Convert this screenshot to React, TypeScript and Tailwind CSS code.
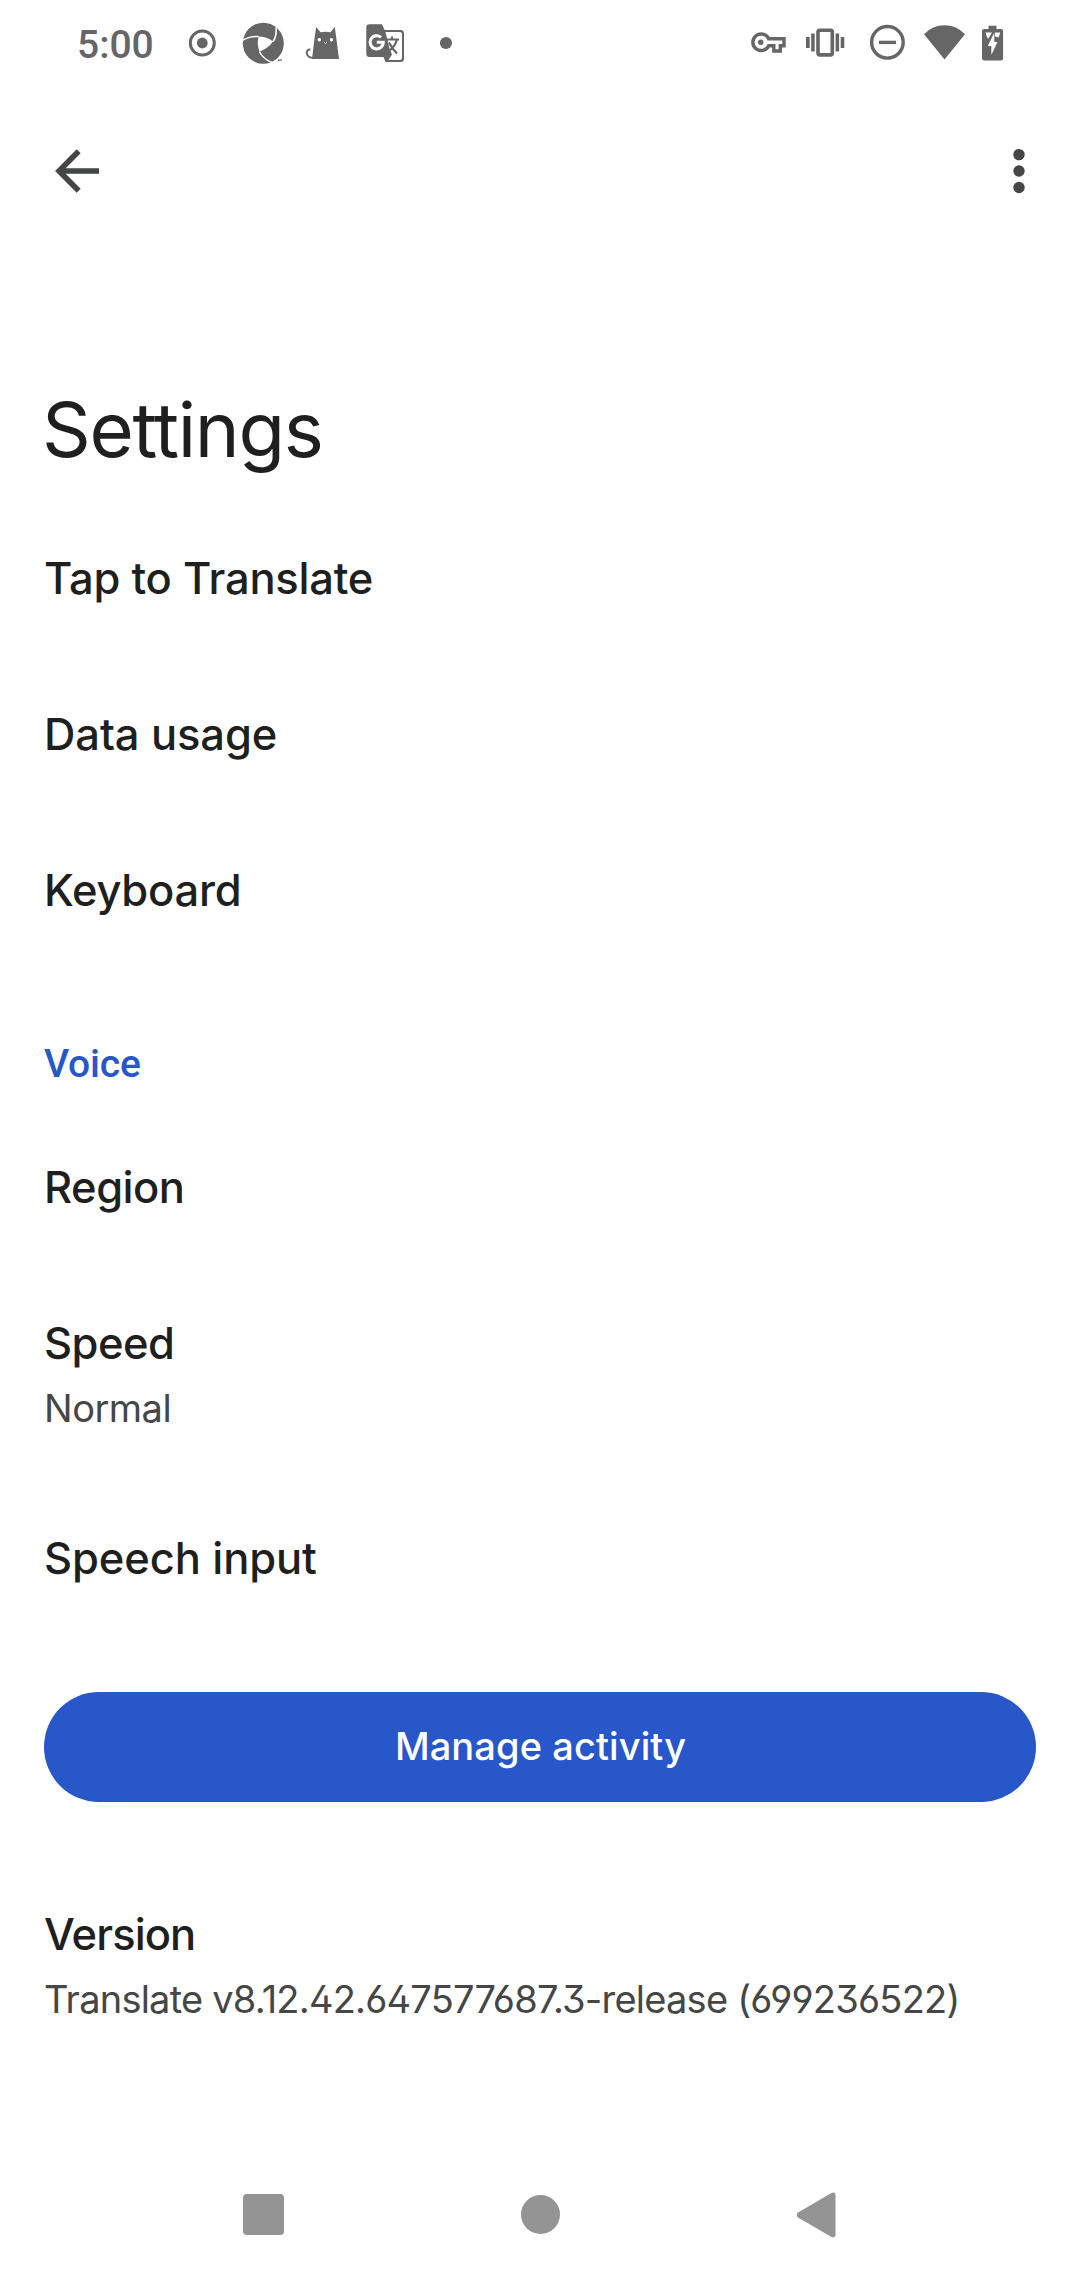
import React from "react";

function StatusBar() {
  return (
    <header className="flex h-[86px] shrink-0 items-start text-[#666666]">
      <span className="ml-[77px] mt-[19px] w-[105px] font-[Roboto] text-[39px] leading-[52px] font-medium">5:00</span>
      <svg className="mt-5 h-[46px] w-[40px]" viewBox="182 20 40 46" fill="currentColor">
        <circle cx="202.3" cy="43" r="12" fill="none" stroke="currentColor" strokeWidth="3" />
        <circle cx="202.3" cy="43" r="5.4" />
      </svg>
      <svg className="ml-[16px] mt-5 h-[46px] w-[50px]" viewBox="238 20 50 46" fill="currentColor">
        <circle cx="263.3" cy="43.3" r="20.5" />
        <path d="M258.500 36.500Q267 36.500 273 41.500Q268 48.500 259.500 51.500Q256.500 44 258.500 36.500Z" fill="#fff" />
        <path
          d="M242 40.500Q249.500 36 258.500 36.500M273 41.500Q277 36 276 27.500M259.500 51.500Q263 59 272 62.500"
          fill="none"
          stroke="#fff"
          strokeWidth="1.600"
        />
        <path d="M278 59.500h4v1.200h-4z" />
      </svg>
      <svg className="ml-[14px] mt-5 h-[46px] w-[42px]" viewBox="302 20 42 46" fill="currentColor">
        <path d="M316.200 27 320.500 32.300Q325.500 31.300 330.500 32.300L334.800 27 336 36 339 59H312L314.800 36Z" />
        <path d="M315 57.800C309 58.300 306.800 55.500 306.700 52.700C306.600 50.500 308.300 49.300 310.300 49.600" fill="none" stroke="currentColor" strokeWidth="2" />
        <circle cx="319.300" cy="39.700" r="1.700" fill="#fff" />
        <circle cx="331.500" cy="39.700" r="1.700" fill="#fff" />
        <path d="m324.300 42.500 1.300 1 1.300-1" stroke="#fff" strokeWidth=".8" fill="none" />
      </svg>
      <svg className="ml-[20px] mt-5 h-[46px] w-[42px]" viewBox="364 20 42 46" fill="currentColor">
        <path d="M369.500 24.300H382L384.600 30H400.500Q404 30 404 33.500V58.500Q404 62 400.500 62H385.500L383.500 57H369.500Q366.300 57 366.300 53.800V27.500Q366.300 24.300 369.500 24.300Z" />
        <path d="M385.500 32H400Q402 32 402 34V58Q402 60 400 60H388.500L392 54.500 389.500 48.500Z" fill="#fff" />
        <path d="M381 37.300A6.600 6.600 0 1 0 383.300 42.300H376.800" fill="none" stroke="#fff" strokeWidth="3" />
        <path d="M387 39.500H399M392 36.500V39.500M397 39.500Q395 47 388 51.500M389 42.500Q392 48.500 397 53.500" fill="none" stroke="currentColor" strokeWidth="2.200" />
      </svg>
      <svg className="ml-[30px] mt-5 h-[46px] w-[20px]" viewBox="436 20 20 46" fill="currentColor">
        <circle cx="446" cy="43" r="6.100" />
      </svg>
      <svg className="ml-[292px] mt-5 h-[46px] w-[40px]" viewBox="748 20 40 46" fill="none" stroke="currentColor" strokeWidth="3.400">
        <path d="M768.700 38.800H784V45.700H780.300V51H773.800V45.700H768.700A8.300 8.300 0 1 1 768.700 38.800Z" />
        <circle cx="760.700" cy="42.300" r="2.700" fill="currentColor" stroke="none" />
      </svg>
      <svg className="ml-[16px] mt-5 h-[46px] w-[42px]" viewBox="804 20 42 46" fill="currentColor">
        <path d="M806 37h3.700v11H806zM811.200 33.500h3.500v18h-3.500zM835.600 33.500h3.500v18h-3.500zM840.700 37h3.600v11h-3.600z" />
        <rect x="818" y="30.300" width="14.300" height="24.600" rx="1.800" fill="none" stroke="currentColor" strokeWidth="3.600" />
      </svg>
      <svg className="ml-[20px] mt-5 h-[46px] w-[42px]" viewBox="866 20 42 46" fill="none" stroke="currentColor" strokeWidth="3.400">
        <circle cx="887.400" cy="42.300" r="15.800" />
        <path d="M879 42.400H896" />
      </svg>
      <svg className="ml-[12px] mt-5 h-[46px] w-[50px]" viewBox="920 20 50 46" fill="currentColor">
        <path d="M944.500 59.500 924 34.300Q932.500 25.300 944.500 25.300T965 34.300Z" />
      </svg>
      <svg className="ml-[8px] mt-5 h-[46px] w-[30px]" viewBox="978 20 30 46" fill="currentColor">
        <path d="M988.500 25.700h8v3.300h4.300q2.300 0 2.300 2.300v27q0 2.300-2.300 2.300h-16.500q-2.300 0-2.300-2.300v-27q0-2.300 2.300-2.300h4.200z" />
        <path d="M985.500 32.500H992L988 39 987 37ZM995 32.500H1000.300L998.500 37.500 995 36.500ZM994.300 32.500V42H997.500L991.300 55V46H987.800Z" fill="#fff" />
      </svg>
    </header>
  );
}

function AppBar() {
  return (
    <div className="flex h-[170px] shrink-0 items-center justify-between pl-[52px] pr-[51px] text-[#444746]">
      <svg className="h-[48px] w-[50px]" viewBox="52 147 50 48" fill="none" stroke="currentColor" strokeWidth="5.600">
        <path d="M99 171H60M78.700 151.200 59 171 78.700 190.800" />
      </svg>
      <svg className="h-[48px] w-[20px]" viewBox="0 0 20 48" fill="currentColor">
        <circle cx="10" cy="7.600" r="5.700" />
        <circle cx="10" cy="24" r="5.700" />
        <circle cx="10" cy="40.500" r="5.700" />
      </svg>
    </div>
  );
}

function Title({ className, children }: { className: string; children: React.ReactNode }) {
  return <div className={`text-[43.5px] leading-[60px] font-medium text-[#1f1f1f] ${className}`}>{children}</div>;
}

function Summary({ className, children }: { className: string; children: React.ReactNode }) {
  return <div className={`mt-[9px] text-[38px] leading-[52px] text-[#444746] ${className}`}>{children}</div>;
}

export default function App() {
  return (
    <div className="flex h-[2280px] w-[1080px] flex-col overflow-hidden bg-white font-[Inter,sans-serif] whitespace-nowrap [font-feature-settings:'ss01']">
      <StatusBar />
      <AppBar />
      <main className="flex flex-1 flex-col px-11">
        <h1 className="-ml-0.5 mt-[123px] mb-[21px] text-[76px] leading-[100px] font-normal tracking-[-1.3px] text-[#1f1f1f]">Settings</h1>
        <section className="flex flex-col">
          <div className="py-12"><Title className="tracking-[-0.25px]">Tap to Translate</Title></div>
          <div className="py-12"><Title className="tracking-[-0.1px]">Data usage</Title></div>
          <div className="py-12"><Title className="tracking-[-0.25px]">Keyboard</Title></div>
        </section>
        <h2 className="mt-[70px] mb-[19px] font-[Roboto] text-[39px] leading-[52px] font-medium tracking-[-0.2px] text-[#2757c8]">Voice</h2>
        <section className="flex flex-col">
          <div className="py-12"><Title className="tracking-[-0.5px]">Region</Title></div>
          <div className="pt-12 pb-[46px]">
            <Title className="tracking-[-0.5px]">Speed</Title>
            <Summary className="tracking-[-0.5px]">Normal</Summary>
          </div>
          <div className="py-12"><Title className="tracking-[-0.1px]">Speech input</Title></div>
        </section>
        <button className="mt-14 flex h-[110px] shrink-0 items-center justify-center rounded-full bg-[#2757c8] pb-0.5 pl-px text-[38px] leading-[52px] font-medium tracking-[0.1px] text-white">
          Manage activity
        </button>
        <div className="mt-[54px] pt-12">
          <Title className="tracking-[-0.9px]">Version</Title>
          <Summary className="tracking-[-0.77px]">Translate v8.12.42.647577687.3-release (699236522)</Summary>
        </div>
      </main>
      <nav className="flex h-[131px] shrink-0 items-center pl-[243px] text-[#949494]">
        <div className="h-[41px] w-[41px] rounded-[4px] bg-[#949494]" />
        <div className="ml-[237px] h-[39px] w-[39px] rounded-full bg-[#949494]" />
        <svg className="ml-[236px] h-[46px] w-[41px]" viewBox="0 0 41 46" fill="currentColor">
          <path d="M2 20.500 35.500 1Q39.500-.5 39.500 3V43Q39.500 46.500 35.500 45L2 25.500Q-.500 23 2 20.500Z" />
        </svg>
      </nav>
    </div>
  );
}
